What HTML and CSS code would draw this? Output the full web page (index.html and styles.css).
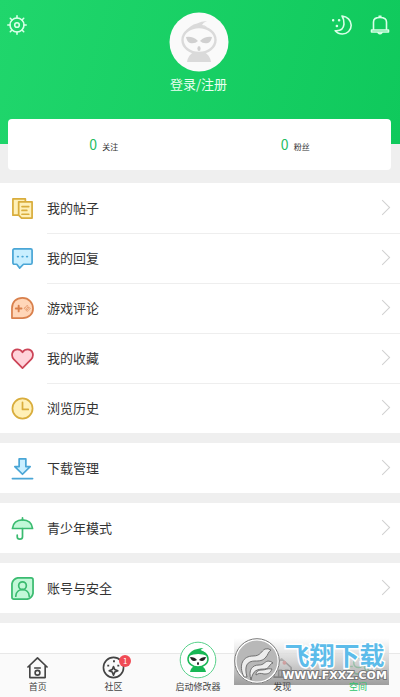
FILE: index.html
```html
<!DOCTYPE html>
<html lang="zh-CN">
<head>
<meta charset="utf-8">
<meta name="viewport" content="width=device-width, initial-scale=1">
<title>空间</title>
<link rel="stylesheet" href="styles.css">
</head>
<body>
<header class="hero">
  <button class="icon-button" aria-label="设置">
    <svg width="20" height="20" viewBox="0 0 20 20" class="light"><circle cx="10" cy="10" r="7"/><circle cx="10" cy="10" r="2.3"/><path d="M10 .8V3M10 17v2.200M.8 10H3M17 10h2.200M3.300 3.300 5 5M15 15l1.700 1.700M3.300 16.700 5 15M15 5l1.700-1.700"/></svg>
  </button>
  <a class="profile" href="#login">
    <svg class="avatar" width="60" height="60" viewBox="0 0 60 60"><circle cx="30" cy="30" r="29.500" fill="#fafafa"/><path d="M18 50q1-7 7-10h10q6 3 7 10z" fill="#dadada"/><ellipse cx="30" cy="28" rx="16.500" ry="13" fill="#fafafa" stroke="#dadada" stroke-width="2.400"/><path d="M16 20Q21 13 28 11.500q4-2.500 10-2.500-4 1.500-5 4 3 0 5 2-11-2-22 5z" fill="#dadada"/><path d="M17 25q7-1 12 4-3 3-8 2-3-1-4-6zM43 25q-7-1-12 4 3 3 8 2 3-1 4-6z" fill="#d0d0d0"/><ellipse cx="30" cy="36.500" rx="1.600" ry="2.500" fill="#d0d0d0"/></svg>
    <span>登录/注册</span>
  </a>
  <div class="hero-actions">
    <button class="icon-button" aria-label="夜间模式">
      <svg width="20" height="20" viewBox="0 0 20 20" class="light"><path d="M10 1c5 .5 9.200 4 9.200 9.300 0 5-4 8.700-8.800 8.700-3 0-5.500-1.300-7.200-3.300 5 .5 8.300-2 8.800-6.500.2-3-.5-6-2-8.200z"/><path d="M1 5.300h.2M7 5.300h.2M4.800 11h.2" stroke-width="2.400"/></svg>
    </button>
    <button class="icon-button" aria-label="消息">
      <svg width="20" height="20" viewBox="0 0 20 20" class="light"><path d="M3.500 14.500V7c0-3.500 2-4.500 6.500-4.500S16.500 3.500 16.500 7v7.500M1.500 15h17v2h-17zM8 17.500q2 2.500 4 0M9 1.200h2"/></svg>
    </button>
  </div>
</header>
<main>
  <section class="stats">
    <a href="#follow"><strong>0</strong><span>关注</span></a>
    <a href="#fans"><strong>0</strong><span>粉丝</span></a>
  </section>
  <nav class="group">
    <a class="row" href="#posts"><svg class="icon yellow" viewBox="0 0 24 24"><path d="M7 19H2V2h13v3"/><path d="M8 5h14v17H11l-3-3z"/><path d="M11.500 10h7M11.500 14h5M11.500 18h7"/></svg><span class="label">我的帖子</span></a>
    <a class="row" href="#replies"><svg class="icon blue" viewBox="0 0 24 24"><path d="M3.500 2h17Q22 2 22 3.500v13q0 1.500-1.500 1.500H13l-4 4-3-4H3.500Q2 18 2 16.500v-13Q2 2 3.500 2z"/><path d="M7 10h.5M11.800 10h.5M16.500 10h.5" stroke-width="2"/></svg><span class="label">我的回复</span></a>
    <a class="row" href="#reviews"><svg class="icon orange" viewBox="0 0 24 24"><path d="M1 22V12C1 5 5.500 1 12 1s11 5 11 11-4.500 10-11 10z"/><path d="M5 12h6M8 9v6" stroke-width="2"/><path d="m17 9 1 1-1 1-1-1zM17 13l1 1-1 1-1-1zM15 11l1 1-1 1-1-1zM19 11l1 1-1 1-1-1z" stroke-width=".7"/></svg><span class="label">游戏评论</span></a>
    <a class="row" href="#favorites"><svg class="icon red" viewBox="0 0 24 24"><path d="M12 22 3 13C-1 8 2 2.500 6.500 2.500Q10 2.500 12 5.500q2-3 5.500-3C22 2.500 25 8 21 13z"/></svg><span class="label">我的收藏</span></a>
    <a class="row" href="#history"><svg class="icon yellow" viewBox="0 0 24 24"><circle cx="12" cy="12" r="10.500"/><path d="M12 5.500V13h6"/></svg><span class="label">浏览历史</span></a>
  </nav>
  <nav class="group">
    <a class="row" href="#downloads"><svg class="icon blue" viewBox="0 0 24 24"><path d="M8.500 2h7v8H20l-8 8-8-8h4.500z"/><path d="M1.500 22.500h21"/></svg><span class="label">下载管理</span></a>
  </nav>
  <nav class="group">
    <a class="row" href="#teen"><svg class="icon green" viewBox="0 0 24 24"><path d="M1.500 12C2 6.500 6 3 12 3s10 3.500 10.500 9z"/><path d="M12 1v2M12 12v8.500c0 3.300-5.500 3.300-5.500 0V19" fill="none"/></svg><span class="label">青少年模式</span></a>
  </nav>
  <nav class="group">
    <a class="row" href="#account"><svg class="icon green" viewBox="0 0 24 24"><path d="M7 1h14Q23 1 23 3v14q-1 5-6 6H3Q1 23 1 21V7q1-5 6-6z"/><circle cx="12" cy="9" r="4"/><path d="M5 20c0-9 14-9 14 0" fill="none"/></svg><span class="label">账号与安全</span></a>
  </nav>
  <div class="group rest"></div>
</main>
<footer class="dock">
  <nav class="tabs">
    <a href="#home"><svg class="tab-icon" viewBox="0 0 24 24"><path d="M1.500 12 12 2l10.500 10M4 10v12.500h16V10M8.500 12.500h7"/><circle cx="12" cy="17.500" r="2.500"/></svg><span>首页</span></a>
    <a href="#community"><span class="with-badge"><svg class="tab-icon" viewBox="0 0 24 24"><circle cx="12" cy="12" r="10.500"/><path d="m12 11 1.300 3.200 3.200 1.300-3.200 1.300L12 20l-1.300-3.200-3.200-1.300 3.200-1.300z"/><path d="M5.500 10h2M11.500 5.500h2M16 10h2" stroke-width="2"/></svg><b class="badge">1</b></span><span>社区</span></a>
    <a class="launch" href="#launch"><svg width="38" height="38" viewBox="0 0 38 38"><circle cx="19" cy="19" r="17.800" fill="#fff" stroke="#58d18a" stroke-width="1"/><path d="M11 31q1-5 5-6h6q4 1 5 6z" fill="#18b755"/><ellipse cx="19" cy="18" rx="10" ry="8" fill="#fff" stroke="#18b755" stroke-width="1.500"/><path d="M9.500 15q2-6 9-7 3-1 6-1-2 1-3 2 6 2 7 6-9-4-19 0z" fill="#18b755"/><path d="M11 16q5 0 7 3-5 3-7-3zM27 16q-5 0-7 3 5 3 7-3z" fill="#222"/><ellipse cx="19" cy="22.500" rx="1" ry="1.600" fill="#222"/></svg><span>启动修改器</span></a>
    <a href="#discover"><svg class="tab-icon" viewBox="0 0 24 24"><path d="M3 22V11l8-8 10 9v10zM8 22v-7h3v7M15 22v-7h3v7"/><circle cx="14" cy="7" r="2" fill="#e33" stroke="none"/></svg><span>发现</span></a>
    <a class="active" href="#space"><svg class="tab-icon" viewBox="0 0 24 24"><circle cx="12" cy="7" r="5"/><path d="M2 22V11h4M18 11h4v11zM7 17q5 4 10 0"/></svg><span>空间</span></a>
  </nav>
  <div class="watermark">
    <svg width="46" height="46" viewBox="0 0 46 46"><circle cx="23" cy="23" r="21.500" fill="#b8b8b8" stroke="#fff" stroke-width="2"/><circle cx="23" cy="23" r="22.300" fill="none" stroke="#777" stroke-width="1"/><path d="M10 39C4 27 9 18 19 18c8 0 8-5 12-7q3-1 6 1c-3 2-3 5-5 7-3 4-7 4-11 4-8 0-11 5-8 16zM17 42c-3-10 1-15 8-15 5 0 5-3 9-4q3 0 5 2c-4 1-3 5-8 6-8 0-12 1-14 11zM22 37c0-4 3-5 6-5 4 0 5-2 10-1-2 5-5 5-8 5-4-1-5-1-8 1z" fill="#ededed" stroke="#666" stroke-width=".9"/></svg>
    <div class="watermark-text"><span class="brand">飞翔下载</span><span class="site">WWW.FXXZ.COM</span></div>
  </div>
</footer>
</body>
</html>
```
FILE: styles.css
```css
* { box-sizing: border-box; }
body {
  margin: 0;
  min-height: 100vh;
  display: flex;
  flex-direction: column;
  background: #efefef;
  color: #333;
  font-family: "Noto Sans CJK SC", sans-serif;
  font-size: 13px;
}
a { color: inherit; text-decoration: none; }
main { flex: 1; display: flex; flex-direction: column; }

.hero {
  height: 144px;
  padding: 12px 10px 0 7px;
  display: grid;
  grid-template-columns: 1fr auto 1fr;
  align-items: start;
  background: linear-gradient(105deg, #20d66c, #0fc95c);
}
.icon-button { display: flex; width: 20px; padding: 3px 0; border: 0; background: none; }
.light { fill: none; stroke: #d9ffe8; stroke-width: 1.6; stroke-linecap: round; stroke-linejoin: round; }
.hero-actions { display: flex; justify-content: flex-end; gap: 18px; }
.profile { display: flex; flex-direction: column; align-items: center; gap: 3px; color: #eafff2; line-height: 18px; }
.avatar { display: block; }

.stats {
  margin: -25px 9px 13px 8px;
  height: 51px;
  display: flex;
  border-radius: 4px;
  background: #fff;
}
.stats a { flex: 1; display: flex; justify-content: center; align-items: baseline; gap: 5px; line-height: 50px; font-size: 8px; }
.stats strong { color: #26bd62; font-size: 14px; font-weight: 400; }

.group { margin-bottom: 10px; background: #fff; }
.rest { flex: 1; margin: 0; }
.row { display: flex; align-items: center; height: 50px; padding-left: 11px; gap: 13px; }
.label { flex: 1; height: 50px; display: flex; align-items: center; justify-content: space-between; padding: 0 12px 2px 0; }
.row + .row .label { border-top: 1px solid #eee; }
.label::after { content: ""; width: 10px; height: 10px; border: solid #d0d0d0; border-width: 1px 1px 0 0; transform: rotate(45deg); }
.icon { width: 23px; height: 23px; fill: var(--fill); stroke: var(--line); stroke-width: 1.8; stroke-linecap: round; stroke-linejoin: round; }
.yellow { --line: #d9ad3c; --fill: #fff0b8; }
.blue { --line: #4aa6d6; --fill: #c9efff; }
.orange { --line: #d9804c; --fill: #ffd6b8; }
.red { --line: #cc4457; --fill: #ffd3da; }
.green { --line: #3abb70; --fill: #c2f8d8; }

.dock { position: relative; background: #fafafa; border-top: 1px solid #e8e8e8; }
.tabs { height: 43px; padding: 0 4px 4px 0; display: flex; align-items: flex-end; font-size: 9px; line-height: 12px; }
.tabs a { flex: 1; display: flex; flex-direction: column; align-items: center; gap: 2px; color: #444; }
.tabs a > span:last-child { position: relative; z-index: 2; }
.tabs .launch { flex: 0 0 93px; margin-top: -20px; }
.tabs .active { color: #2dc56a; }
.tab-icon { display: block; width: 23px; height: 23px; fill: none; stroke: currentColor; stroke-width: 1.7; stroke-linejoin: round; }
.with-badge { position: relative; }
.badge {
  position: absolute;
  top: -1px;
  right: -6px;
  width: 12px;
  height: 12px;
  border-radius: 50%;
  background: #f04b55;
  color: #fff;
  font-size: 8px;
  font-weight: 400;
  text-align: center;
}

.watermark {
  position: absolute;
  z-index: 1;
  right: 11px;
  bottom: 12px;
  display: flex;
  width: 155px;
  height: 47px;
  background: linear-gradient(#fffffff0, #c8c8c8c0 50%, #808080c0);
}
.watermark-text { flex: 1; display: flex; flex-direction: column; white-space: nowrap; text-align: center; }
.brand {
  font-size: 25px;
  line-height: 32px;
  font-weight: 700;
  color: #5cbcea;
  paint-order: stroke fill;
  -webkit-text-stroke: 3px #fff;
}
.site {
  font-family: "DejaVu Sans", sans-serif;
  font-size: 11px;
  line-height: 12px;
  font-weight: 700;
  color: #fff;
  paint-order: stroke fill;
  -webkit-text-stroke: 2px #777;
}
```
